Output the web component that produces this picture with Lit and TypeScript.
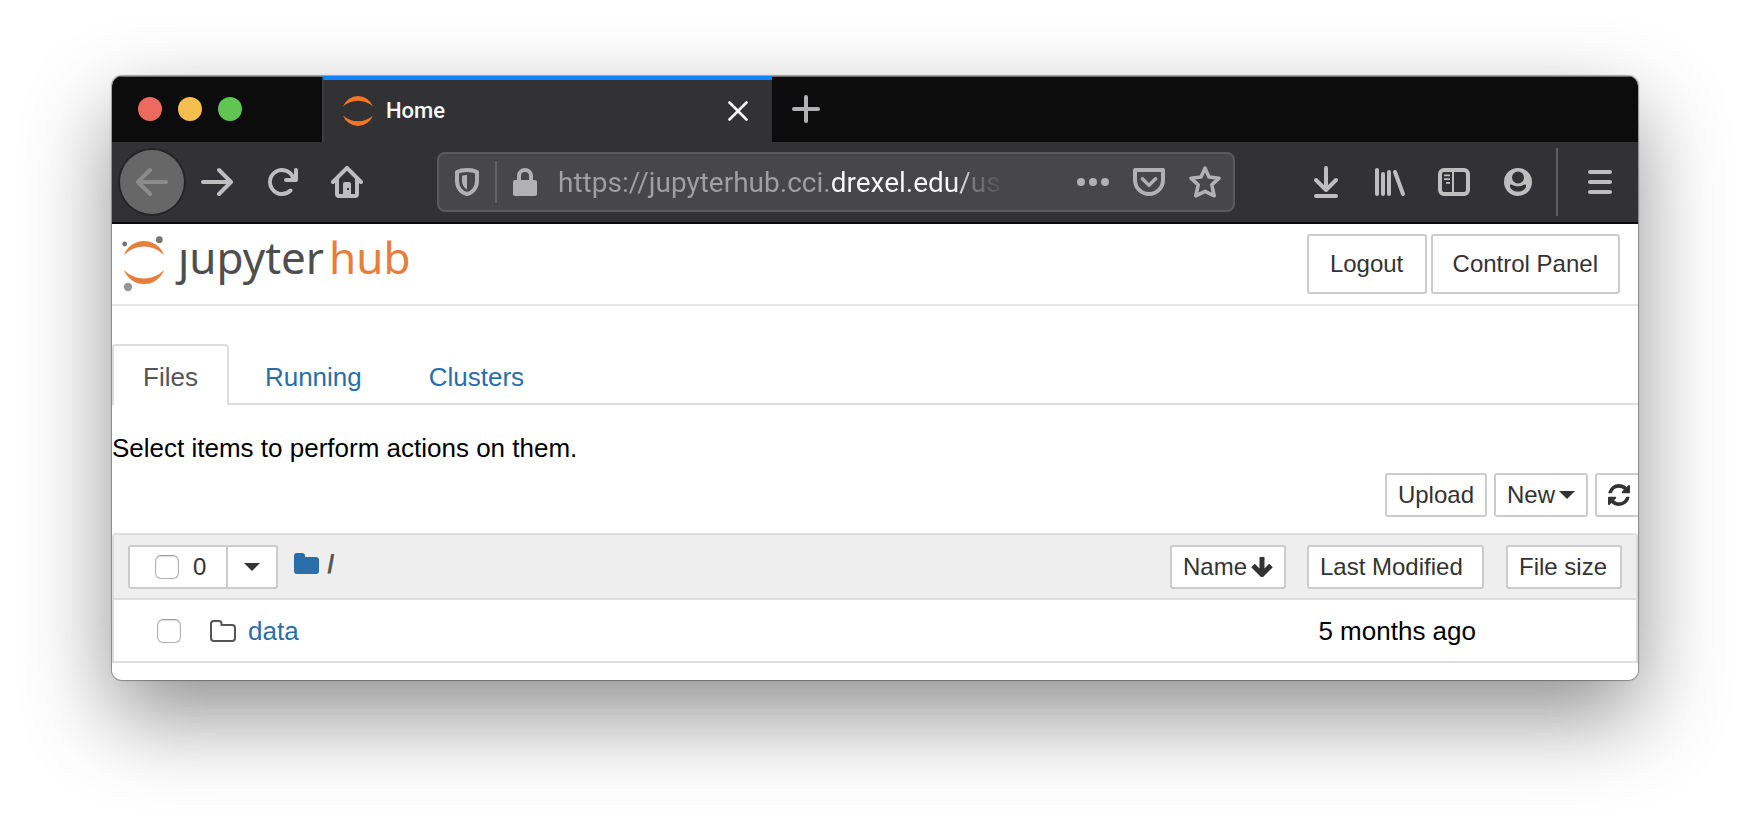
import { LitElement, html, css, svg } from "lit";
import { customElement, property, state } from "lit/decorators.js";

const icons = {
  back: svg`<path d="M15 7H3.414l4.293-4.293a1 1 0 0 0-1.414-1.414l-6 6a1 1 0 0 0 0 1.414l6 6a1 1 0 0 0 1.414-1.414L3.414 9H15a1 1 0 0 0 0-2z"/>`,
  forward: svg`<path transform="translate(16 0) scale(-1 1)" d="M15 7H3.414l4.293-4.293a1 1 0 0 0-1.414-1.414l-6 6a1 1 0 0 0 0 1.414l6 6a1 1 0 0 0 1.414-1.414L3.414 9H15a1 1 0 0 0 0-2z"/>`,
  reload: svg`<path d="M15 1a1 1 0 0 0-1 1v2.418A6.995 6.995 0 1 0 8 15a6.954 6.954 0 0 0 4.95-2.05 1 1 0 0 0-1.414-1.414A5.019 5.019 0 1 1 12.549 6H10a1 1 0 0 0 0 2h5a1 1 0 0 0 1-1V2a1 1 0 0 0-1-1z"/>`,
  home: svg`<path fill-rule="evenodd" d="M15.707 7.293l-7-7a1 1 0 0 0-1.414 0l-7 7a1 1 0 0 0 1.414 1.414L2 8.414V14a2 2 0 0 0 2 2h8a2 2 0 0 0 2-2V8.414l.293.293a1 1 0 0 0 1.414-1.414zM12 14h-2V9a1 1 0 0 0-1-1H7a1 1 0 0 0-1 1v5H4V6.414l4-4 4 4z M8 11h1v1H8z"/>`,
  shield: svg`<path fill="none" stroke="currentColor" stroke-width="2" stroke-linejoin="round" d="M8 2C6.2 2 4.4 2.3 3 3v4.4C3 10.700 4.900 13.400 8 14c3.100-.6 5-3.300 5-6.600V3c-1.400-.7-3.200-1-5-1z"/><path d="M8 4.500c-.9 0-1.700.1-2.500.4v2.500c0 2 .9 3.600 2.500 4.300z"/>`,
  lock: svg`<path fill="none" stroke="currentColor" stroke-width="2" d="M5 8V5a3 3 0 0 1 6 0v3"/><rect x="2" y="7" width="12" height="8" rx="1"/>`,
  dots: svg`<circle cx="2" cy="8" r="2"/><circle cx="8" cy="8" r="2"/><circle cx="14" cy="8" r="2"/>`,
  pocket: svg`<path fill="none" stroke="currentColor" stroke-width="2" stroke-linejoin="round" d="M1 2h14v5a7 7 0 0 1-14 0z"/><path fill="none" stroke="currentColor" stroke-width="1.700" stroke-linecap="round" stroke-linejoin="round" d="M4.700 6.400L8 9.700l3.300-3.300"/>`,
  star: svg`<path fill="none" stroke="currentColor" stroke-width="1.800" stroke-linejoin="round" d="M8 1.100l2 4.400 5 .6-3.600 3.300 1.200 5.500L8 12.700l-4.600 2.200 1.200-5.500L1 6.100l5-.6z"/>`,
  download: svg`<path fill="none" stroke="currentColor" stroke-width="2" stroke-linecap="round" stroke-linejoin="round" d="M8 1v11M3 7l5 5 5-5M3 15h10"/>`,
  library: svg`<path fill="none" stroke="currentColor" stroke-width="2" stroke-linecap="round" d="M1.500 2v12M4.500 4v10M7.500 3v11M10.500 3l4 11"/>`,
  sidebar: svg`<rect x="1" y="2" width="14" height="12" rx="2" fill="none" stroke="currentColor" stroke-width="2"/><path d="M7 2h1v12H7zM3 4.200h3v.9H3zM3 6.100h3V7H3zM4 8h2v.9H4z"/>`,
  account: svg`<path fill-rule="evenodd" d="M8 1a7 7 0 1 1 0 14A7 7 0 0 1 8 1zM8 2.800a3 3 0 1 0 0 6A3 3 0 0 0 8 2.800zM4.200 9.300c-.7.3 0 3.500 3.800 3.500s4.500-3.200 3.800-3.500c-.7-.3-1.300.8-3.800.8s-3.100-1.100-3.800-.8z"/>`,
  menu: svg`<path fill="none" stroke="currentColor" stroke-width="2" stroke-linecap="round" d="M3 3h10M3 8h10M3 13h10"/>`,
};

/** One glyph-only button of the browser chrome. */
@customElement("chrome-button")
export class ChromeButton extends LitElement {
  @property() icon: keyof typeof icons = "menu";
  @property() label = "";

  static styles = css`
    :host { display: block; flex: none; }
    .button {
      display: grid;
      place-items: center;
      width: var(--slot, 64px);
      height: var(--slot, 64px);
      padding: 0;
      border: 0;
      background: none;
      color: inherit;
    }
    :host([round]) .button {
      background: #676767;
      color: #8b8b8b;
      border-radius: 50%;
      box-shadow: 0 0 0 2px #252526;
    }
    .icon { width: 32px; height: 32px; }
  `;

  render() {
    return html`<button class="button" type="button" aria-label=${this.label}>
      <svg class="icon" viewBox="0 0 16 16" fill="currentColor" aria-hidden="true">${icons[this.icon]}</svg>
    </button>`;
  }
}

/** Tab strip, navigation buttons and address field. */
@customElement("browser-chrome")
export class BrowserChrome extends LitElement {
  static styles = css`
    :host { display: block; color: #bebebf; }
    .strip {
      display: flex;
      height: 66px;
      background: #0c0c0d;
      box-shadow: inset 0 1px #6c6c6c;
    }
    .lights {
      display: flex;
      align-items: center;
      gap: 16px;
      flex: none;
      width: 184px;
      padding-left: 26px;
    }
    .light {
      width: 24px;
      height: 24px;
      padding: 0;
      border: 0;
      border-radius: 50%;
    }
    .close { background: #ec6a5e; }
    .minimise { background: #f5bf4f; }
    .zoom { background: #61c554; }
    .tab {
      display: flex;
      align-items: center;
      flex: 0 1 450px;
      box-sizing: border-box;
      padding: 0 24px 0 19px;
      border-top: 4px solid #0a84ff;
      border-left: 2px solid #3e3e40;
      background: #323234;
      color: #f9f9fa;
      font: 500 22px/28px Roboto, sans-serif;
    }
    .favicon { width: 30px; height: 30px; margin-right: 13px; }
    .title { flex: 1; }
    .plain { display: grid; padding: 0; border: 0; background: none; color: inherit; }
    .plus { align-items: center; padding: 0 20px; color: #b1b1b3; }
    .bar {
      display: flex;
      align-items: center;
      height: 80px;
      padding: 0 6px 0 8px;
      background: #323234;
      border-bottom: 2px solid #0c0c0d;
    }
    .nav { display: flex; gap: 1px; flex: none; }
    .tools { display: flex; flex: none; }
    .rule { width: 2px; height: 68px; margin: 0 10px 0 6px; background: #5c5c5e; flex: none; }
    .address {
      --slot: 56px;
      display: flex;
      align-items: center;
      flex: 1;
      min-width: 0;
      height: 56px;
      margin: 0 59px 0 58px;
      border: 2px solid #5b5b5d;
      border-radius: 8px;
      background: #474749;
      color: #b1b1b3;
    }
    .divider { width: 2px; height: 42px; background: #62626e; flex: none; }
    .url {
      flex: 1;
      min-width: 0;
      margin: 0 56px 0 5px;
      padding: 2px 0 0;
      border: 0;
      outline: 0;
      font: 400 28px/40px Roboto, sans-serif;
      color: transparent;
      caret-color: #fff;
      background: linear-gradient(90deg, #a0a0a2 273px, #f9f9fa 273px 395px, #c0c0c2 411px, #808082 412px, #47474900 450px);
      -webkit-background-clip: text;
      background-clip: text;
    }
  `;

  render() {
    return html`
      <div class="strip">
        <div class="lights">
          <button class="light close" aria-label="Close window"></button>
          <button class="light minimise" aria-label="Minimise window"></button>
          <button class="light zoom" aria-label="Zoom window"></button>
        </div>
        <div class="tab">
          <svg class="favicon" viewBox="0 0 30 30" fill="#f37726" aria-hidden="true">
            <path d="M0 10.500A16 16 0 0 1 30 10.500A22.300 22.300 0 0 0 0 10.500z" />
            <path d="M0 19.500A16 16 0 0 0 30 19.500A22.300 22.300 0 0 1 0 19.500z" />
          </svg>
          <span class="title">Home</span>
          <button class="plain" aria-label="Close tab">
            <svg width="20" height="20" viewBox="0 0 20 20" stroke="#fff" stroke-width="2.600" stroke-linecap="round">
              <path d="M1.500 1.500l17 17M18.500 1.500l-17 17" />
            </svg>
          </button>
        </div>
        <button class="plain plus" aria-label="New tab">
          <svg width="28" height="28" viewBox="0 0 28 28" stroke="currentColor" stroke-width="4" stroke-linecap="round">
            <path d="M14 2v24M2 14h24" />
          </svg>
        </button>
      </div>
      <div class="bar">
        <div class="nav">
          <chrome-button round icon="back" label="Back"></chrome-button>
          <chrome-button icon="forward" label="Forward"></chrome-button>
          <chrome-button icon="reload" label="Reload"></chrome-button>
          <chrome-button icon="home" label="Home page"></chrome-button>
        </div>
        <div class="address">
          <chrome-button icon="shield" label="Tracking protection"></chrome-button>
          <span class="divider"></span>
          <chrome-button icon="lock" label="Connection"></chrome-button>
          <input class="url" aria-label="Address" value="https://jupyterhub.cci.drexel.edu/us" />
          <chrome-button icon="dots" label="Page actions"></chrome-button>
          <chrome-button icon="pocket" label="Save to Pocket"></chrome-button>
          <chrome-button icon="star" label="Bookmark"></chrome-button>
        </div>
        <div class="tools">
          <chrome-button icon="download" label="Downloads"></chrome-button>
          <chrome-button icon="library" label="Library"></chrome-button>
          <chrome-button icon="sidebar" label="Sidebars"></chrome-button>
          <chrome-button icon="account" label="Account"></chrome-button>
        </div>
        <span class="rule"></span>
        <chrome-button icon="menu" label="Menu"></chrome-button>
      </div>
    `;
  }
}

/** The file browser page. */
@customElement("hub-page")
export class HubPage extends LitElement {
  @state() private files = [{ name: "data", modified: "5 months ago", size: "" }];

  static styles = css`
    :host {
      display: block;
      padding-bottom: 17px;
      background: #fff;
      color: #000;
      font: 26px/36px "Liberation Sans", Arial, sans-serif;
    }
    a { color: #296eaa; text-decoration: none; }
    .header {
      display: flex;
      justify-content: space-between;
      align-items: center;
      height: 80px;
      padding: 0 18px 0 10px;
      border-bottom: 2px solid #e7e7e7;
    }
    .header .logo {
      display: flex;
      align-items: flex-start;
      gap: 14px;
      color: #4e4e4e;
      font: 44px/42px "Noto Sans", "Open Sans", sans-serif;
    }
    .mark { width: 42px; height: 56px; }
    .hub { margin-left: 5px; color: #e67f3c; }
    .actions { display: flex; gap: 4px; }
    .btn {
      display: inline-flex;
      align-items: center;
      justify-content: center;
      gap: 4px;
      box-sizing: border-box;
      height: 44px;
      padding: 0 11px;
      border: 2px solid #ccc;
      border-radius: 3px;
      background: #fff;
      color: #333;
      font: 24px/36px "Liberation Sans", Arial, sans-serif;
      white-space: nowrap;
    }
    .large { height: 60px; min-width: 120px; padding: 0 20px; }
    .tabs {
      display: flex;
      gap: 5px;
      margin-top: 38px;
      border-bottom: 2px solid #ddd;
    }
    .tab {
      padding: 13px 29px 10px;
      border: 2px solid transparent;
      border-bottom: 0;
      border-radius: 4px 4px 0 0;
      margin-bottom: -2px;
    }
    .current { border-color: #ddd; background: #fff; color: #555; }
    .hint { margin: 25px 0 7px; }
    .toolbar {
      display: flex;
      justify-content: flex-end;
      gap: 7px;
      margin: 0 -5px 16px 0;
    }
    .caret {
      border: 8px solid transparent;
      border-top-color: currentColor;
      border-bottom: 0;
    }
    .list {
      width: 100%;
      border: 2px solid #ddd;
      border-bottom: 0;
      border-radius: 4px 4px 0 0;
      border-spacing: 0;
    }
    th { height: 63px; padding: 0; background: #eee; font-weight: 400; }
    td { height: 61px; padding: 0; }
    th, td { border-bottom: 2px solid #ddd; text-align: left; }
    .name { width: 116px; }
    .modified { width: 177px; padding-left: 21px; }
    .size { width: 116px; padding: 0 14px 0 22px; }
    .sort { width: 100%; justify-content: flex-start; }
    .when { padding-right: 8px; text-align: right; }
    .line { display: flex; align-items: center; }
    .head { padding-left: 14px; }
    .entry { padding-left: 43px; }
    .group { display: flex; margin-right: 16px; }
    .all { gap: 14px; padding: 0 20px 0 25px; border-radius: 3px 0 0 3px; }
    .more { padding: 0 16px; margin-left: -2px; border-radius: 0 3px 3px 0; }
    .check {
      appearance: none;
      width: 24px;
      height: 24px;
      margin: 0;
      border: 1px solid #b0b0b0;
      border-top-color: #999;
      border-radius: 6px;
      background: #fff;
      box-shadow: inset 0 1px 2px #0002;
    }
    .path { gap: 8px; padding-bottom: 6px; }
    .slash { color: #555; font-weight: 700; }
    .outline { margin: 0 12px 0 29px; }
  `;

  render() {
    return html`
      <header class="header">
        <a class="logo" href="#" aria-label="jupyterhub">
          <svg class="mark" viewBox="0 0 42 56" fill="#e67f3c" aria-hidden="true">
            <path d="M2 19A21.300 21.300 0 0 1 42 19A27.800 27.800 0 0 0 2 19z" />
            <path d="M2 34A21.300 21.300 0 0 0 42 34A27.800 27.800 0 0 1 2 34z" />
            <circle cx="2.700" cy="8" r="2.400" fill="#6f7070" />
            <circle cx="37.300" cy="3.700" r="3.400" fill="#767677" />
            <circle cx="6" cy="51" r="4.200" fill="#989798" />
          </svg>
          <span>ȷupyter<span class="hub">hub</span></span>
        </a>
        <div class="actions">
          <button class="btn large">Logout</button>
          <button class="btn large">Control Panel</button>
        </div>
      </header>
      <nav class="tabs">
        <a class="tab current" href="#files">Files</a>
        <a class="tab" href="#running">Running</a>
        <a class="tab" href="#clusters">Clusters</a>
      </nav>
      <p class="hint">Select items to perform actions on them.</p>
      <div class="toolbar">
        <button class="btn">Upload</button>
        <button class="btn">New <span class="caret"></span></button>
        <button class="btn" aria-label="Refresh">
          <svg width="22" height="22" viewBox="0 0 1536 1536" fill="currentColor">
            <path d="M1511 928q0 5-1 7-64 268-268 434.500T764 1536q-146 0-282.500-55T238 1324l-129 129q-19 19-45 19t-45-19-19-45V960q0-26 19-45t45-19h448q26 0 45 19t19 45-19 45l-137 137q71 66 161 102t187 36q134 0 250-65t186-179q11-17 53-117 8-23 30-23h192q13 0 22.500 9.500t9.500 22.500zm25-800v448q0 26-19 45t-45 19h-448q-26 0-45-19t-19-45 19-45l138-138Q969 256 768 256q-134 0-250 65T332 500q-11 17-53 117-8 23-30 23H50q-13 0-22.500-9.500T18 608v-7q65-268 270-434.500T768 0q146 0 284 55.500T1297 212l130-129q19-19 45-19t45 19 19 45z" />
          </svg>
        </button>
      </div>
      <table class="list">
        <thead>
          <tr>
            <th>
              <div class="line head">
                <div class="group">
                  <label class="btn all"><input class="check" type="checkbox" aria-label="Select all" />0</label>
                  <button class="btn more" aria-label="Select by type"><span class="caret"></span></button>
                </div>
                <div class="line path">
                  <a class="line" href="#root" aria-label="Root folder">
                    <svg width="25" height="21" viewBox="0 0 25 21" fill="currentColor">
                      <path d="M0 3a3 3 0 0 1 3-3h5a3 3 0 0 1 3 3v1h11a3 3 0 0 1 3 3v11a3 3 0 0 1-3 3H3a3 3 0 0 1-3-3z" />
                    </svg>
                  </a>
                  <span class="slash">/</span>
                </div>
              </div>
            </th>
            <th class="name">
              <button class="btn sort">Name
                <svg width="22" height="20" viewBox="0 0 22 20" fill="none" stroke="currentColor" stroke-width="5">
                  <path d="M11 0v17M2 8.500l9 9 9-9" />
                </svg>
              </button>
            </th>
            <th class="modified"><button class="btn sort">Last Modified</button></th>
            <th class="size"><button class="btn sort">File size</button></th>
          </tr>
        </thead>
        <tbody>
          ${this.files.map(
            (file) => html`<tr>
              <td colspan="2">
                <div class="line entry">
                  <input class="check" type="checkbox" aria-label="Select ${file.name}" />
                  <svg class="outline" width="26" height="22" viewBox="0 0 26 22" fill="none" stroke="#555" stroke-width="2">
                    <path d="M1 4a3 3 0 0 1 3-3h5a2.500 2.500 0 0 1 2.500 2.500V5H22a3 3 0 0 1 3 3v10a3 3 0 0 1-3 3H4a3 3 0 0 1-3-3z" />
                  </svg>
                  <a href="#data">${file.name}</a>
                </div>
              </td>
              <td class="when">${file.modified}</td>
              <td>${file.size}</td>
            </tr>`
          )}
        </tbody>
      </table>
    `;
  }
}

@customElement("app-root")
export class AppRoot extends LitElement {
  static styles = css`
    :host {
      display: block;
      box-sizing: border-box;
      min-height: 100vh;
      padding: 76px 112px 148px;
      background: #fff;
      overflow: hidden;
    }
    .window {
      overflow: hidden;
      border-radius: 10px;
      box-shadow: 0 0 1px 1px #0005, 0 36px 88px #00000070;
    }
  `;

  render() {
    return html`<main class="window">
      <browser-chrome></browser-chrome>
      <hub-page></hub-page>
    </main>`;
  }
}
